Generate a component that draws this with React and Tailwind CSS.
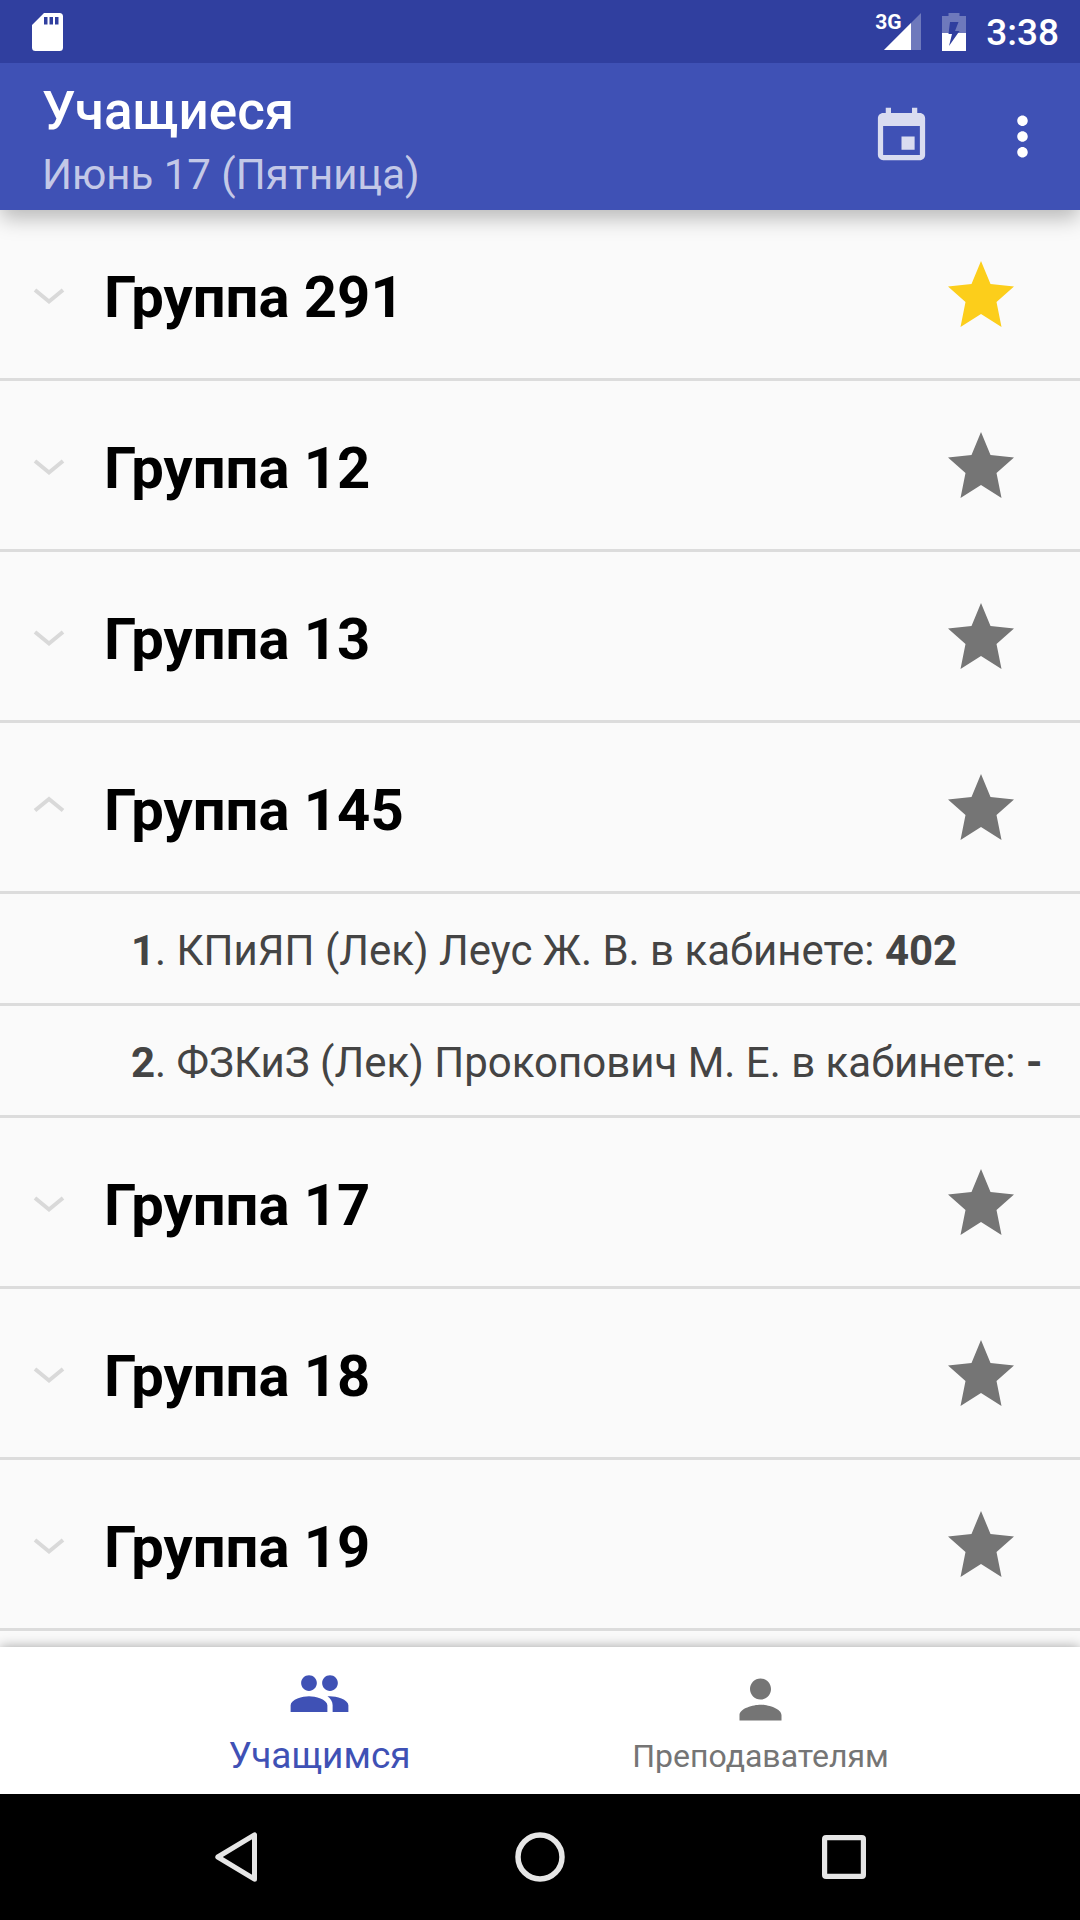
import { useState } from "react";
import { MdEvent, MdMoreVert, MdPeople, MdPerson } from "react-icons/md";

const GROUPS = [
  { name: "Группа 291" },
  { name: "Группа 12" },
  { name: "Группа 13" },
  {
    name: "Группа 145",
    lessons: [
      { text: "КПиЯП (Лек) Леус Ж. В. в кабинете:", room: "402" },
      { text: "ФЗКиЗ (Лек) Прокопович М. Е. в кабинете:", room: "-" },
    ],
  },
  { name: "Группа 17" },
  { name: "Группа 18" },
  { name: "Группа 19" },
];

function StatusBar() {
  return (
    <div className="flex h-[63px] items-center bg-[#303f9f] pr-[21px] pl-8 text-white">
      <svg className="h-[38px] w-[31px]" viewBox="0 0 31 38" aria-hidden="true">
        <path
          fill="currentColor"
          fillRule="evenodd"
          d="M12 0H27.500a3.500 3.500 0 0 1 3.500 3.500V34.500a3.500 3.500 0 0 1-3.500 3.500H3.500a3.500 3.500 0 0 1-3.500-3.500V12ZM12 4v7.500h3.500V4ZM17.500 4v7.500h3.500V4ZM23 4v7.500h3.500V4Z"
        />
      </svg>
      <div className="relative ml-auto h-[38px] w-[46px]">
        <span className="absolute top-0 left-0 text-[21px] leading-[18px] font-bold">3G</span>
        <svg className="h-full w-full" viewBox="0 0 46 38" aria-hidden="true">
          <path fill="#fff" fillOpacity="0.3" d="M46 0V37H9Z" />
          <path fill="#fff" d="M36 10V37H9Z" />
        </svg>
      </div>
      <svg className="ml-[21px] h-[38px] w-6" viewBox="0 0 24 38" aria-hidden="true">
        <path fill="#fff" fillOpacity="0.3" d="M6.500 0H17.500V3H24V20H0V3H6.500Z" />
        <path fill="#fff" d="M0 20H24V38H0Z" />
        <path fill="#303f9f" d="M8 9H16.500L13 18H17.500L7 33L10 21H6.500Z" />
      </svg>
      <span className="ml-5 pt-[3px] text-[37px] leading-[44px] font-medium">3:38</span>
    </div>
  );
}

function AppBar() {
  return (
    <div className="flex items-center bg-[#3f51b5] pr-[26px] pl-[42px]">
      <div className="flex-1 pt-[17px] pb-[3px]">
        <h1 className="text-[53px] leading-[62px] font-medium text-white">Учащиеся</h1>
        <p className="text-[42px] leading-[65px] text-white/70">Июнь 17 (Пятница)</p>
      </div>
      <div className="flex gap-[58px]">
        <button type="button" aria-label="Выбрать дату" className="text-white/80">
          <MdEvent className="size-[63px]" />
        </button>
        <button type="button" aria-label="Ещё" className="text-white">
          <MdMoreVert className="size-[63px]" />
        </button>
      </div>
    </div>
  );
}

function GroupRow({ name, open, starred, onToggle, onStar }) {
  return (
    <div className="flex h-[171px] items-center border-b-[3px] border-[#dcdcdc] pr-[66px]">
      <button
        type="button"
        aria-expanded={open}
        onClick={onToggle}
        className="flex h-full flex-1 items-center gap-9 pt-[6px] pl-8 text-left"
      >
        <svg className="size-9 text-[#d9d9d9]" viewBox="0 0 36 36" fill="none" aria-hidden="true">
          <path
            stroke="currentColor"
            strokeWidth="4"
            d={open ? "M3 18.500L17 7L31 18.500" : "M3 11L17 22.500L31 11"}
          />
        </svg>
        <span className="text-[58px] leading-[68px] font-bold text-black">{name}</span>
      </button>
      <button
        type="button"
        aria-label={`Избранное: ${name}`}
        aria-pressed={starred}
        onClick={onStar}
        className={starred ? "text-[#fcce1b]" : "text-[#757575]"}
      >
        <svg className="size-[66px]" viewBox="0 0 66 66" aria-hidden="true">
          <path
            fill="currentColor"
            d="M33 0L42.500 23L66 25.500L48.500 41L53.500 66L33 53L12.500 66L17.500 41L0 25.500L23.500 23Z"
          />
        </svg>
      </button>
    </div>
  );
}

function LessonRow({ number, text, room }) {
  return (
    <li className="h-28 border-b-[3px] border-[#dcdcdc] pt-8 pl-[131px] text-[42px] leading-[49px] whitespace-nowrap text-[#444]">
      <b>{number}</b>. {text} <b>{room}</b>
    </li>
  );
}

function SystemNav() {
  return (
    <nav aria-label="Система" className="flex h-[126px] items-center justify-center bg-black text-[#e6e6e6]">
      <button type="button" aria-label="Назад" className="flex w-[304px] justify-center">
        <svg className="h-[50px] w-[42px]" viewBox="0 0 42 50" fill="none" aria-hidden="true">
          <path
            stroke="currentColor"
            strokeWidth="5"
            strokeLinejoin="round"
            d="M39.500 2.800V47.200L2.800 25Z"
          />
        </svg>
      </button>
      <button type="button" aria-label="Домой" className="flex w-[304px] justify-center">
        <svg className="size-[50px]" viewBox="0 0 50 50" fill="none" aria-hidden="true">
          <circle cx="25" cy="25" r="22" stroke="currentColor" strokeWidth="5.500" />
        </svg>
      </button>
      <button type="button" aria-label="Недавние" className="flex w-[304px] justify-center">
        <svg className="size-11" viewBox="0 0 44 44" fill="none" aria-hidden="true">
          <rect x="2.600" y="2.600" width="38.800" height="38.800" rx="1.500" stroke="currentColor" strokeWidth="5.200" />
        </svg>
      </button>
    </nav>
  );
}

export default function App() {
  const [openGroup, setOpenGroup] = useState("Группа 145");
  const [favourite, setFavourite] = useState("Группа 291");

  return (
    <div className="flex min-h-screen flex-col overflow-x-hidden bg-[#fafafa] font-['Roboto',sans-serif]">
      <header className="relative z-10 shadow-[0_9px_20px_-1px_rgba(0,0,0,0.27)]">
        <StatusBar />
        <AppBar />
      </header>

      <main className="flex-1">
        {GROUPS.map((group) => (
          <section key={group.name}>
            <GroupRow
              name={group.name}
              open={openGroup === group.name}
              starred={favourite === group.name}
              onToggle={() => setOpenGroup(openGroup === group.name ? null : group.name)}
              onStar={() => setFavourite(group.name)}
            />
            {openGroup === group.name && group.lessons && (
              <ol>
                {group.lessons.map((lesson, i) => (
                  <LessonRow key={lesson.text} number={i + 1} text={lesson.text} room={lesson.room} />
                ))}
              </ol>
            )}
          </section>
        ))}
      </main>

      <nav
        aria-label="Разделы"
        className="relative z-10 flex h-[147px] justify-center bg-white shadow-[0_0_12px_rgba(0,0,0,0.35)]"
      >
        <button
          type="button"
          aria-current="page"
          className="flex w-[441px] flex-col items-center justify-end gap-[9px] pb-4 text-[#3f51b5]"
        >
          <MdPeople className="size-[63px]" />
          <span className="text-[37px] leading-[44px]">Учащимся</span>
        </button>
        <button
          type="button"
          className="flex w-[441px] flex-col items-center justify-end gap-[3px] pb-4 text-[#757575]"
        >
          <MdPerson className="size-[63px]" />
          <span className="text-[32px] leading-[44px]">Преподавателям</span>
        </button>
      </nav>

      <SystemNav />
    </div>
  );
}
